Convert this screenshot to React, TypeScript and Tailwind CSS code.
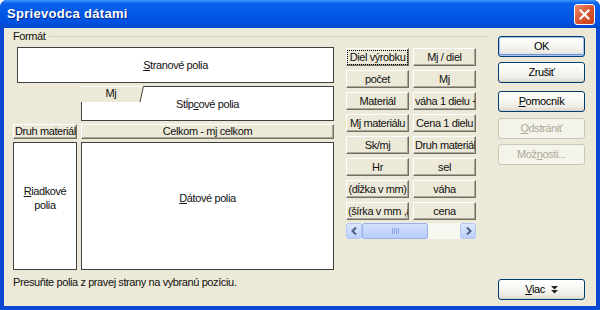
import React from 'react'

const fields = [
  ['Diel výrobku', 'Mj / diel'],
  ['počet', 'Mj'],
  ['Materiál', 'váha 1 dielu + ostatné'],
  ['Mj materiálu', 'Cena 1 dielu'],
  ['Sk/mj', 'Druh materiálu'],
  ['Hr', 'sel'],
  ['(dĺžka v mm)', 'váha'],
  ['(šírka v mm ,a', 'cena'],
]

const FieldButton = function ({
  label,
  focused = false,
}: {
  label: string
  focused?: boolean
}) {
  return (
    <div className="flex h-[18px] w-[63px] items-center overflow-hidden border border-t-white border-l-white border-r-[#716f64] border-b-[#716f64] bg-[#ece9d8] shadow-[inset_-1px_-1px_0_#aca899]">
      <span
        className={
          focused
            ? 'mx-[1px] block w-full overflow-hidden whitespace-nowrap text-center leading-[13px] outline-1 outline-dotted outline-black'
            : 'block w-full overflow-hidden whitespace-nowrap px-[1px] text-center leading-[13px]'
        }
      >
        {label}
      </span>
    </div>
  )
}

const Header = function ({ label, width }: { label: string; width: string }) {
  return (
    <div
      className={`${width} h-[15px] overflow-hidden whitespace-nowrap border border-t-white border-l-white border-r-[#716f64] border-b-[#716f64] bg-[#ece9d8] px-[1px] text-center leading-[12px] shadow-[inset_-1px_-1px_0_#aca899]`}
    >
      {label}
    </div>
  )
}

const XpButton = function ({
  children,
  disabled = false,
  isDefault = false,
  className = '',
}: {
  children: React.ReactNode
  disabled?: boolean
  isDefault?: boolean
  className?: string
}) {
  if (disabled) {
    return (
      <div
        className={`${className} flex h-[21px] w-[87px] items-center justify-center rounded-[3px] border border-[#c9c7ba] bg-[#f5f4ea] text-[#aca899]`}
      >
        {children}
      </div>
    )
  }
  return (
    <div
      className={`${className} flex h-[21px] w-[87px] items-center justify-center rounded-[3px] border border-[#003c74] bg-[linear-gradient(to_bottom,#ffffff_0%,#f7f7f3_45%,#ecebe4_80%,#d8d4c8_100%)] text-black ${
        isDefault
          ? 'shadow-[inset_0_0_0_1px_#a9c3ef,inset_0_-1px_0_1px_#6d94e0]'
          : 'shadow-[inset_0_-1px_0_#d6d0c5]'
      }`}
    >
      {children}
    </div>
  )
}

const Chevron = function ({ dir }: { dir: 'left' | 'right' }) {
  return (
    <svg width="7" height="8" viewBox="0 0 7 8">
      <path
        d={dir === 'left' ? 'M5 0.5 L1.5 4 L5 7.5' : 'M2 0.5 L5.5 4 L2 7.5'}
        fill="none"
        stroke="#4d6185"
        strokeWidth="2"
      />
    </svg>
  )
}

const ScrollBar = function () {
  return (
    <div className="mt-[3px] flex h-[16px] w-[130px] bg-[#f7f7f2]">
      <div className="flex w-[16px] items-center justify-center rounded-[2px] border border-[#b4c8f6] bg-[linear-gradient(to_bottom,#dce7fd,#bcd0fb)]">
        <Chevron dir="left" />
      </div>
      <div className="flex w-[66px] items-center justify-center rounded-[2px] border border-[#98b1ea] bg-[linear-gradient(to_bottom,#d3e0fd,#b9cdfb)]">
        <div className="flex gap-[1px]">
          <div className="h-[6px] w-[1px] bg-[#8aa6e6]" />
          <div className="h-[6px] w-[1px] bg-[#8aa6e6]" />
          <div className="h-[6px] w-[1px] bg-[#8aa6e6]" />
          <div className="h-[6px] w-[1px] bg-[#8aa6e6]" />
        </div>
      </div>
      <div className="flex-1" />
      <div className="flex w-[16px] items-center justify-center rounded-[2px] border border-[#b4c8f6] bg-[linear-gradient(to_bottom,#dce7fd,#bcd0fb)]">
        <Chevron dir="right" />
      </div>
    </div>
  )
}

export default function App() {
  return (
    <div className="flex h-[310px] w-[600px] flex-col overflow-hidden rounded-t-[7px] bg-[#0b47d3] font-['Liberation_Sans',Arial,sans-serif] text-[11px] tracking-[-0.4px] text-[#111]">
      {/* title bar */}
      <div className="flex h-[28px] shrink-0 items-center bg-[linear-gradient(to_bottom,#3d95ff_0%,#0a62ea_12%,#0058e6_50%,#0052df_80%,#0046cc_100%)] pl-[7px] pr-[5px]">
        <span className="flex-1 text-[13px] font-bold tracking-[0.3px] text-white [text-shadow:1px_1px_0_#0a2a8a]">
          Sprievodca dátami
        </span>
        <div className="flex h-[21px] w-[21px] items-center justify-center rounded-[3px] border border-white bg-[linear-gradient(135deg,#ec8c6c_0%,#d9532f_55%,#c43d17_100%)]">
          <svg width="11" height="11" viewBox="0 0 11 11">
            <path
              d="M1.5 1.5 L9.5 9.5 M9.5 1.5 L1.5 9.5"
              stroke="white"
              strokeWidth="2.2"
              strokeLinecap="square"
            />
          </svg>
        </div>
      </div>

      {/* body */}
      <div className="mx-[4px] mb-[4px] flex flex-1 bg-[#ece9d8] pb-[6px] pl-[9px] pt-[2px]">
        <div className="flex w-[475px] flex-col">
          <div className="flex h-[13px] items-center">
            <span>Formát</span>
            <div className="ml-[4px] h-px flex-1 bg-[#d0d0bf]" />
          </div>

          <div className="mt-[4px] flex">
            {/* pivot layout */}
            <div className="flex w-[321px] flex-col">
              <div className="ml-[4px] flex h-[36px] w-[317px] items-center justify-center border border-[#404040] bg-white">
                <span>
                  <span className="underline">S</span>tranové polia
                </span>
              </div>

              <div className="relative ml-[68px] mt-[3px] flex h-[35px] w-[253px] items-center justify-center border border-[#404040] bg-white pt-[2px]">
                <span>
                  Stĺp<span className="underline">c</span>ové polia
                </span>
                <div className="absolute -left-px -top-px h-[16px] w-[63px]">
                  <svg
                    width="63"
                    height="16"
                    viewBox="0 0 63 16"
                    className="absolute left-0 top-0"
                  >
                    <path d="M0 0 H62.5 L59 16 H0 Z" fill="#ece9d8" />
                    <path
                      d="M62.5 0 L59 16"
                      stroke="#404040"
                      strokeWidth="1"
                      fill="none"
                    />
                    <path d="M0 0.5 H62" stroke="#ffffff" strokeWidth="1" />
                  </svg>
                  <span className="relative block w-[60px] text-center leading-[14px]">
                    Mj
                  </span>
                </div>
              </div>

              <div className="mt-[3px] flex gap-[4px]">
                <Header label="Druh materiálu" width="w-[64px]" />
                <Header label="Celkom - mj celkom" width="w-[253px]" />
              </div>

              <div className="mt-[3px] flex gap-[4px]">
                <div className="flex h-[128px] w-[64px] items-center justify-center border border-[#404040] bg-white pb-[16px] text-center leading-[14px]">
                  <span>
                    <span className="underline">R</span>iadkové
                    <br />
                    polia
                  </span>
                </div>
                <div className="flex h-[128px] w-[253px] items-center justify-center border border-[#404040] bg-white pb-[16px]">
                  <span>
                    <span className="underline">D</span>átové polia
                  </span>
                </div>
              </div>
            </div>

            {/* field list */}
            <div className="ml-[12px] flex flex-col pt-[1px]">
              <div className="grid grid-cols-[63px_63px] gap-[4px]">
                {fields.map(([a, b], i) => (
                  <React.Fragment key={a}>
                    <FieldButton label={a} focused={i === 0} />
                    <FieldButton label={b} />
                  </React.Fragment>
                ))}
              </div>
              <ScrollBar />
            </div>
          </div>

          <div className="mt-[6px] leading-[13px]">
            Presuňte polia z pravej strany na vybranú pozíciu.
          </div>
        </div>

        {/* dialog buttons */}
        <div className="ml-[10px] flex flex-col pt-[6px]">
          <XpButton isDefault>OK</XpButton>
          <XpButton className="mt-[5px]">Zrušiť</XpButton>
          <XpButton className="mt-[8px]">
            <span>
              <span className="underline">P</span>omocník
            </span>
          </XpButton>
          <XpButton className="mt-[6px]" disabled>
            <span>
              <span className="underline">O</span>dstrániť
            </span>
          </XpButton>
          <XpButton className="mt-[5px]" disabled>
            <span>
              Mož<span className="underline">n</span>osti...
            </span>
          </XpButton>
          <XpButton className="mt-auto">
            <span className="flex items-center gap-[6px]">
              <span>
                <span className="underline">V</span>iac
              </span>
              <svg width="7" height="9" viewBox="0 0 7 9">
                <path d="M0 1 H7 L3.5 4.5 Z M0 5 H7 L3.5 8.5 Z" fill="#222" />
              </svg>
            </span>
          </XpButton>
        </div>
      </div>
    </div>
  )
}
